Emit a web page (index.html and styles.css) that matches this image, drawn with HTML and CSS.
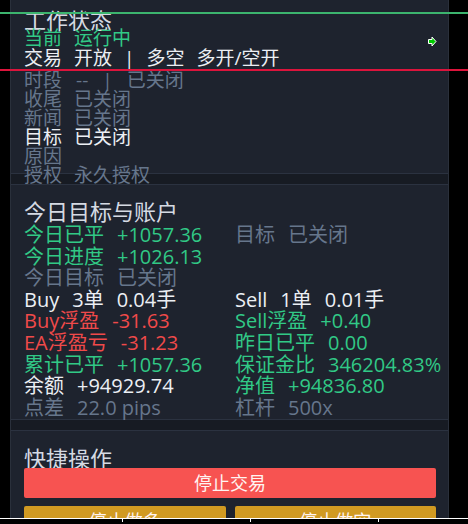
FILE: index.html
```html
<!DOCTYPE html>
<html lang="zh-CN">
<head>
<meta charset="utf-8">
<title>EA 面板</title>
<link rel="stylesheet" href="styles.css">
</head>
<body>
<svg class="chart" width="468" height="524" viewBox="0 0 468 524" aria-hidden="true">
  <g fill="#1fd11f">
    <rect x="0" y="7" width="3" height="1"/><rect x="9" y="7" width="1" height="1"/>
    <rect x="0" y="21" width="3" height="1"/>
    <rect x="0" y="33" width="3" height="1"/><rect x="9" y="33" width="1" height="1"/>
    <rect x="0" y="62" width="6" height="1"/><rect x="9" y="63" width="1" height="1"/>
    <rect x="2" y="97" width="1" height="18"/><rect x="6" y="106" width="1" height="9"/><rect x="8" y="113" width="2" height="1"/>
    <rect x="0" y="501" width="3" height="1"/><rect x="9" y="501" width="1" height="1"/>
    <rect x="0" y="517" width="3" height="1"/>
    <rect x="450" y="4" width="8" height="1"/><rect x="464" y="4" width="4" height="1"/>
    <rect x="450" y="7" width="8" height="1"/><rect x="464" y="7" width="4" height="1"/>
    <rect x="458" y="0" width="1" height="25"/><rect x="462" y="0" width="1" height="1"/>
    <rect x="454" y="22" width="1" height="5"/><rect x="450" y="26" width="5" height="1"/>
    <rect x="450" y="28" width="5" height="1"/><rect x="463" y="28" width="5" height="1"/>
    <rect x="450" y="30" width="18" height="1"/>
    <rect x="450" y="57" width="8" height="1"/><rect x="463" y="57" width="5" height="1"/>
    <rect x="450" y="62" width="8" height="1"/><rect x="463" y="62" width="5" height="1"/>
    <rect x="451" y="501" width="7" height="1"/><rect x="464" y="501" width="4" height="1"/>
    <rect x="451" y="517" width="7" height="1"/><rect x="464" y="517" width="4" height="1"/>
  </g>
  <g fill="#e8112d">
    <rect x="0" y="402" width="3" height="1"/><rect x="9" y="402" width="1" height="1"/>
    <rect x="451" y="402" width="6" height="1"/><rect x="464" y="402" width="4" height="1"/>
  </g>
  <rect x="0" y="76" width="468" height="1" fill="#7a8796"/>
  <g stroke="#7a8796" stroke-width="1" stroke-dasharray="3 3">
    <line x1="1" y1="93.5" x2="468" y2="93.5"/>
    <line x1="1" y1="158.5" x2="468" y2="158.5"/>
    <line x1="1" y1="223.5" x2="468" y2="223.5"/>
    <line x1="1" y1="288.5" x2="468" y2="288.5"/>
    <line x1="1" y1="353.5" x2="468" y2="353.5"/>
    <line x1="1" y1="418.5" x2="468" y2="418.5"/>
    <line x1="1" y1="483.5" x2="468" y2="483.5"/>
  </g>
  <g class="hash" fill="#f4f4f4">
    <text x="3" y="9">#</text>
    <text x="3" y="27">#</text>
    <text x="3" y="52">#</text>
    <text x="3" y="63">#</text>
    <text x="3" y="399">#</text>
    <text x="3" y="499">#</text>
    <text x="3" y="515">#</text>
  </g>
</svg>

<main class="panel">
  <section class="sec status">
    <h2 class="title">工作状态</h2>
    <div class="row g"><span>当前</span><span>运行中</span></div>
    <div class="row w step-1"><span>交易</span><span>开放</span><span class="sep">|</span><span>多空</span><span>多开/空开</span></div>
    <div class="row d wide step-3"><span>时段</span><span>--</span><span class="sep">|</span><span>已关闭</span></div>
    <div class="row d"><span>收尾</span><span>已关闭</span></div>
    <div class="row d"><span>新闻</span><span>已关闭</span></div>
    <div class="row w"><span>目标</span><span>已关闭</span></div>
    <div class="row d"><span>原因</span></div>
    <div class="row d"><span>授权</span><span>永久授权</span></div>
  </section>

  <div class="divider"></div>

  <section class="sec account">
    <h2 class="title">今日目标与账户</h2>
    <div class="grid">
      <div class="row g"><span>今日已平</span><span>+1057.36</span></div>
      <div class="row d"><span>目标</span><span>已关闭</span></div>

      <div class="row g"><span>今日进度</span><span>+1026.13</span></div>
      <div class="row"></div>

      <div class="row d"><span>今日目标</span><span>已关闭</span></div>
      <div class="row"></div>

      <div class="row w"><span>Buy</span><span>3单</span><span>0.04手</span></div>
      <div class="row w"><span>Sell</span><span>1单</span><span>0.01手</span></div>

      <div class="row r"><span>Buy浮盈</span><span>-31.63</span></div>
      <div class="row g"><span>Sell浮盈</span><span>+0.40</span></div>

      <div class="row r"><span>EA浮盈亏</span><span>-31.23</span></div>
      <div class="row g"><span>昨日已平</span><span>0.00</span></div>

      <div class="row g"><span>累计已平</span><span>+1057.36</span></div>
      <div class="row g"><span>保证金比</span><span>346204.83%</span></div>

      <div class="row w"><span>余额</span><span>+94929.74</span></div>
      <div class="row g"><span>净值</span><span>+94836.80</span></div>

      <div class="row d"><span>点差</span><span>22.0 pips</span></div>
      <div class="row d"><span>杠杆</span><span>500x</span></div>
    </div>
  </section>

  <div class="divider"></div>

  <section class="sec quick">
    <h2 class="title">快捷操作</h2>
    <div class="actions">
      <button class="btn btn-stop" type="button">停止交易</button>
      <div class="pair">
        <button class="btn btn-warn" type="button">停止做多</button>
        <button class="btn btn-warn" type="button">停止做空</button>
      </div>
    </div>
  </section>
</main>

<svg class="overlay" width="468" height="524" viewBox="0 0 468 524" aria-hidden="true">
  <rect x="0" y="12" width="468" height="2" fill="#3cb46e"/>
  <rect x="0" y="69" width="468" height="2" fill="#dc143c"/>
  <polygon points="428.5,39.5 432,39.5 432,37 436,41.5 432,46 432,43.5 428.5,43.5" fill="#00cc00" stroke="#ffffff" stroke-width="1"/>
  <rect x="0" y="518" width="468" height="6" fill="#000"/>
  <rect x="0" y="518" width="468" height="1" fill="#ffffff"/>
  <rect x="122" y="519" width="1" height="3" fill="#ffffff"/>
  <rect x="250" y="519" width="1" height="3" fill="#ffffff"/>
  <rect x="378" y="519" width="1" height="3" fill="#ffffff"/>
</svg>
</body>
</html>
```

FILE: styles.css
```css
html, body {
  margin: 0;
  padding: 0;
  width: 468px;
  height: 524px;
  overflow: hidden;
  background: #000;
}

body {
  font-family: "Open Sans", "Noto Sans CJK SC", sans-serif;
  position: relative;
}

.chart {
  position: absolute;
  left: 0;
  top: 0;
  z-index: -1;
}

.chart .hash {
  font-family: "DejaVu Sans Mono", monospace;
  font-size: 13px;
}

.overlay {
  position: absolute;
  left: 0;
  top: 0;
  z-index: 2;
  pointer-events: none;
}

.panel {
  display: block;
  margin-left: 10px;
  width: 439px;
  height: 524px;
  box-sizing: border-box;
  background: #1e232e;
  border-left: 1px solid #2a303b;
  border-right: 1px solid #2a303b;
}

.sec {
  box-sizing: border-box;
  padding: 0 12px 0 13px;
}

.title {
  margin: 0;
  font-size: 22px;
  font-weight: 400;
  color: #d5dae3;
  white-space: nowrap;
}

.row {
  display: flex;
  gap: 12px;
  white-space: nowrap;
}

.row.wide {
  gap: 14px;
}

.g { color: #31c986; }
.w { color: #eceff4; }
.d { color: #66768c; }
.r { color: #f04a4a; }

/* 工作状态 */
.status {
  height: 173px;
  padding-top: 11px;
  font-size: 19px;
  line-height: 19px;
}

.status .title {
  line-height: 18px;
}

.status .step-1 {
  margin-top: 1px;
}

.status .step-3 {
  margin-top: 3px;
}

.divider {
  height: 10px;
  background: #171b23;
  border-top: 1px solid #2b3240;
  border-bottom: 1px solid #2b3240;
}

/* 今日目标与账户 */
.account {
  height: 234px;
  padding-top: 14px;
  font-size: 20px;
  line-height: 21.6px;
}

.account .title {
  line-height: 25px;
}

.grid {
  display: grid;
  grid-template-columns: 211px 1fr;
  grid-auto-rows: 21.6px;
}

.account .row {
  gap: 13px;
}

/* 快捷操作 */
.quick {
  padding-top: 18px;
}

.quick .title {
  line-height: 19px;
}

.actions {
  display: flex;
  flex-direction: column;
  gap: 8px;
}

.pair {
  display: grid;
  grid-template-columns: 1fr 1fr;
  gap: 9px;
}

.btn {
  display: block;
  width: 100%;
  height: 30px;
  margin: 0;
  padding: 0;
  border: none;
  border-radius: 2px;
  font-family: "Open Sans", "Noto Sans CJK SC", sans-serif;
  font-size: 18px;
  line-height: 30px;
  color: #fff4f2;
  text-align: center;
}

.btn-stop {
  background: #f75351;
}

.btn-warn {
  background: #d19a22;
}
```
